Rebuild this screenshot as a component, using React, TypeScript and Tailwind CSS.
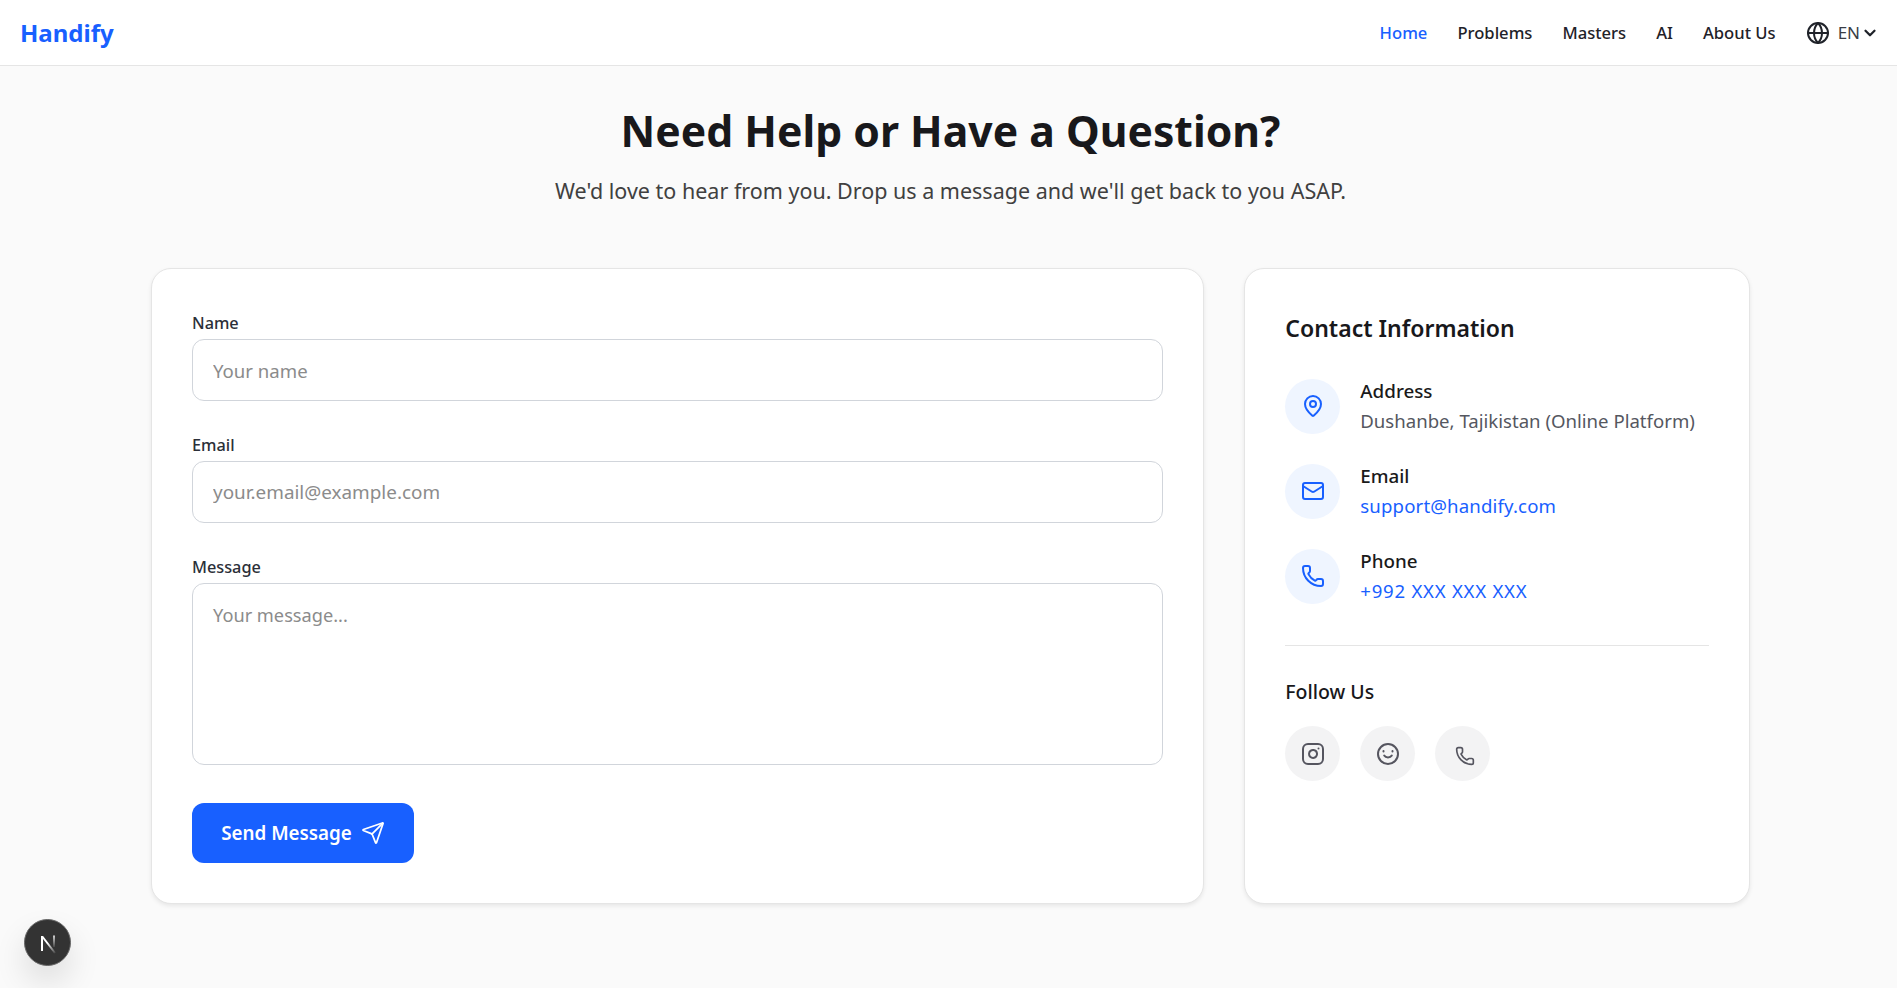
import { Globe, ChevronDown, MapPin, Mail, Phone, Send, Instagram } from "lucide-react";

const font = "font-['Noto_Sans','Open_Sans',sans-serif]";

function NavLink({ label, active }: { label: string; active?: boolean }) {
  return (
    <a className={active ? "text-[#1860ff] text-[16.6px] font-medium" : "text-[#1f2229] text-[16.6px] font-medium"}>{label}</a>
  );
}

function Field({ label, placeholder, area, size }: { label: string; placeholder: string; area?: boolean; size: string }) {
  return (
    <div className="flex flex-col">
      <label className="text-[16.3px] leading-[28px] font-medium text-[#2b2f38] mb-[2px]">{label}</label>
      {area ? (
        <textarea
          placeholder={placeholder}
          className={`${size} h-[182px] w-full resize-none rounded-[12px] border border-[#d1d5db] bg-white px-[20px] py-[18px] leading-[27px] outline-none placeholder:text-[#8b8b8b]`}
        />
      ) : (
        <input
          placeholder={placeholder}
          className={`${size} h-[62px] w-full rounded-[12px] border border-[#d1d5db] bg-white px-[20px] outline-none placeholder:text-[#8b8b8b]`}
        />
      )}
    </div>
  );
}

function ContactRow({ icon, title, value, valueClass }: { icon: React.ReactNode; title: string; value: string; valueClass: string }) {
  return (
    <div className="flex items-center gap-[20px]">
      <div className="flex h-[55px] w-[55px] shrink-0 items-center justify-center rounded-full bg-[#eff5ff] text-[#1860ff]">{icon}</div>
      <div className="flex flex-col">
        <span className="text-[18.8px] leading-[30px] font-medium text-[#1a1a1a]">{title}</span>
        <span className={`text-[18.6px] leading-[30px] ${valueClass}`}>{value}</span>
      </div>
    </div>
  );
}

function Social({ children }: { children: React.ReactNode }) {
  return <div className="flex h-[55px] w-[55px] items-center justify-center rounded-full bg-[#f3f3f4] text-[#55555f]">{children}</div>;
}

export default function App() {
  return (
    <div className={`${font} min-h-[988px] bg-[#fafafa] relative`}>
      <header className="flex h-[66px] items-center justify-between border-b border-[#e5e5e5] bg-white pl-[20px] pr-[18px] pt-[1px]">
        <span className="text-[24px] font-bold text-[#1860ff]">Handify</span>
        <nav className="flex items-center gap-[30px]">
          <NavLink label="Home" active />
          <NavLink label="Problems" />
          <NavLink label="Masters" />
          <NavLink label="AI" />
          <NavLink label="About Us" />
          <div className="flex items-center text-[#1f2229]">
            <Globe size={24} strokeWidth={2} />
            <span className="ml-[8px] text-[17px] text-[#3a3d45]">EN</span>
            <ChevronDown size={18} strokeWidth={3} className="ml-[1px]" />
          </div>
        </nav>
      </header>

      <main className="pl-[151px] pr-[147px]">
        <div className="flex flex-col items-center pt-[32px]">
          <h1 className="text-[42.7px] leading-[66px] font-bold text-[#18181b]">Need Help or Have a Question?</h1>
          <p className="mt-[10px] text-[21.5px] leading-[33px] text-[#404040]">We'd love to hear from you. Drop us a message and we'll get back to you ASAP.</p>
        </div>

        <div className="mt-[61px] flex gap-[40px]">
          <section className="flex w-[1054px] flex-col rounded-[20px] border border-[#e5e5e5] bg-white p-[40px] shadow-[0_2px_4px_rgba(0,0,0,0.08)]">
            <div className="flex flex-col gap-[30px]">
              <Field label="Name" placeholder="Your name" size="text-[18.6px]" />
              <Field label="Email" placeholder="your.email@example.com" size="text-[18.9px]" />
              <Field label="Message" placeholder="Your message..." area size="text-[18.2px]" />
            </div>
            <button className="mt-[38px] flex h-[60px] w-[222px] items-center justify-center gap-[9px] rounded-[12px] bg-[#1860ff] text-[18.8px] font-semibold text-white">
              Send Message
              <Send size={24} strokeWidth={1.75} />
            </button>
          </section>

          <aside className="w-[506px] rounded-[20px] border border-[#e5e5e5] bg-white p-[40px] shadow-[0_2px_4px_rgba(0,0,0,0.08)]">
            <h2 className="text-[23px] leading-[38px] font-semibold text-[#18181b]">Contact Information</h2>
            <div className="mt-[29px] flex flex-col gap-[25px]">
              <ContactRow icon={<MapPin size={24} strokeWidth={2} />} title="Address" value="Dushanbe, Tajikistan (Online Platform)" valueClass="text-[#55575f]" />
              <ContactRow icon={<Mail size={24} strokeWidth={2} />} title="Email" value="support@handify.com" valueClass="text-[#1860ff] tracking-[0.15px]" />
              <ContactRow icon={<Phone size={24} strokeWidth={2} />} title="Phone" value="+992 XXX XXX XXX" valueClass="text-[#1860ff] tracking-[0.75px]" />
            </div>
            <div className="mt-[39px] border-t border-[#e5e5e5]" />
            <h3 className="mt-[32px] text-[19.5px] leading-[27px] font-medium text-[#18181b]">Follow Us</h3>
            <div className="mt-[21px] flex gap-[20px]">
              <Social><Instagram size={24} strokeWidth={2} /></Social>
              <Social>
                <svg width="24" height="24" viewBox="0 0 24 24" fill="none" stroke="currentColor" strokeWidth="2" strokeLinecap="round">
                  <circle cx="12" cy="12" r="10" />
                  <path d="M8.2 13.5c1.6 2.6 6 2.6 7.6 0" />
                  <path d="M7.5 9.5V9M16.5 9.5V9" />
                </svg>
              </Social>
              <Social><Phone size={20} strokeWidth={2} className="translate-x-[2px] translate-y-[2px]" /></Social>
            </div>
          </aside>
        </div>
      </main>

      <div className="absolute left-[24px] bottom-[22px] flex h-[47px] w-[47px] items-center justify-center rounded-full border border-[#666] bg-[#333] shadow-[0_16px_32px_rgba(0,0,0,0.12)]">
        <svg width="24" height="24" viewBox="0 0 24 24" fill="none">
          <defs>
            <linearGradient id="nfade" x1="8" y1="8" x2="19" y2="22" gradientUnits="userSpaceOnUse">
              <stop offset="0.3" stopColor="white" />
              <stop offset="1" stopColor="white" stopOpacity="0.1" />
            </linearGradient>
            <linearGradient id="nfade2" x1="18" y1="4" x2="18" y2="16" gradientUnits="userSpaceOnUse">
              <stop offset="0" stopColor="white" stopOpacity="0.8" />
              <stop offset="1" stopColor="white" stopOpacity="0.1" />
            </linearGradient>
          </defs>
          <path d="M6 20V5" stroke="white" strokeWidth="2" />
          <path d="M6.3 5.5L19 22" stroke="url(#nfade)" strokeWidth="2" />
          <path d="M18 4.5V16" stroke="url(#nfade2)" strokeWidth="2" />
        </svg>
      </div>
    </div>
  );
}
